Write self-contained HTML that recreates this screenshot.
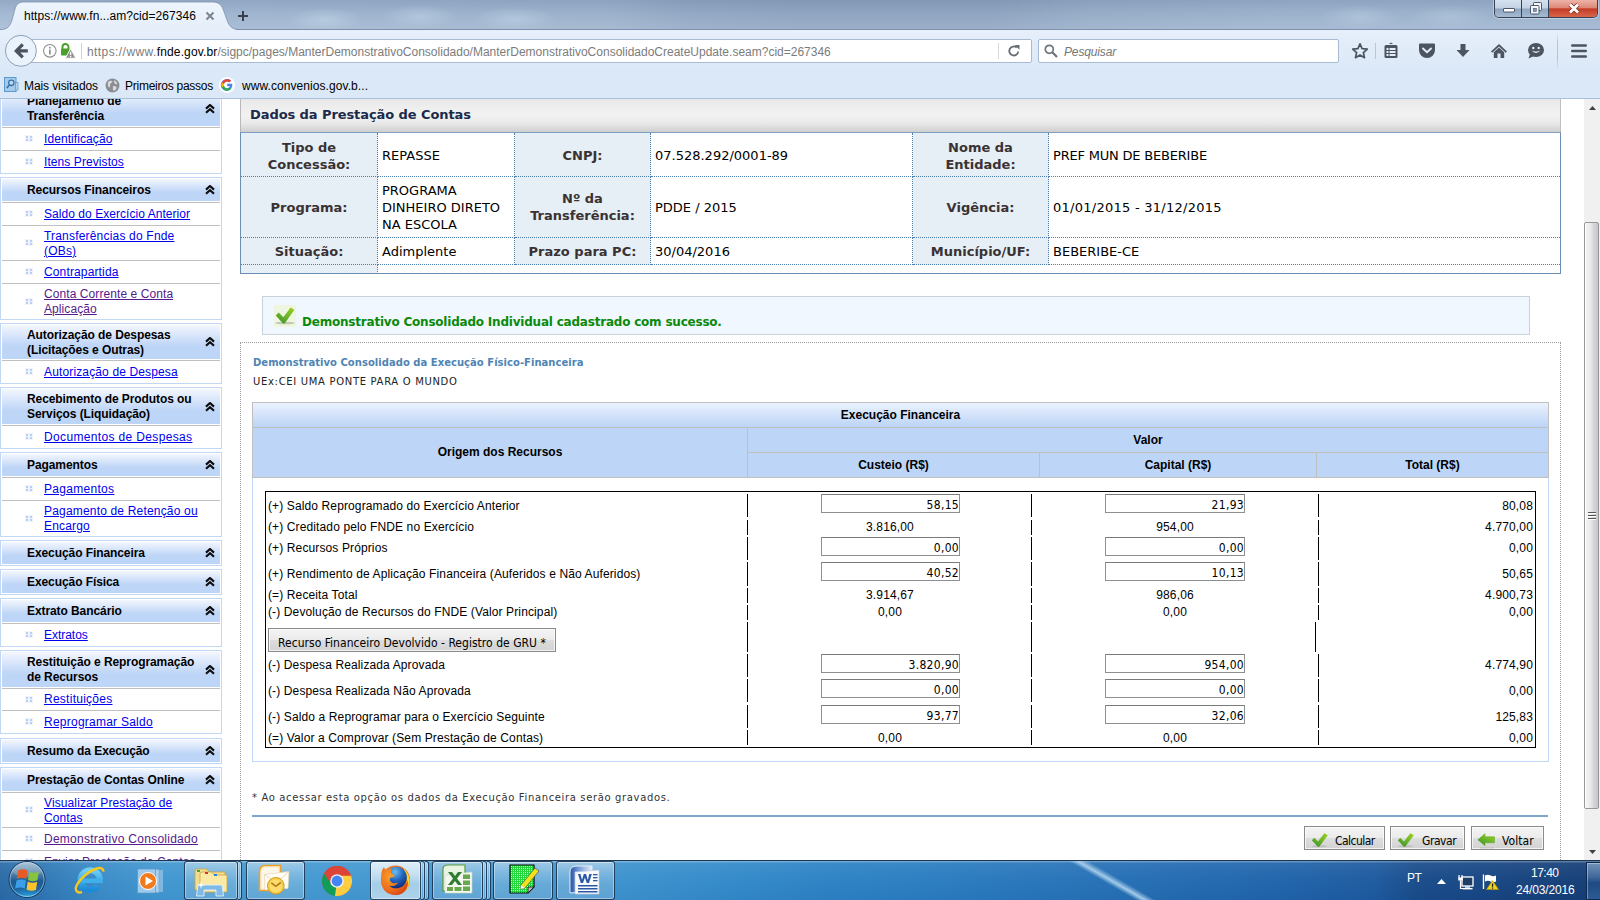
<!DOCTYPE html>
<html lang="pt-BR">
<head>
<meta charset="utf-8">
<title>SiGPC - Demonstrativo Consolidado</title>
<style>
*{box-sizing:border-box;margin:0;padding:0}
html,body{width:1600px;height:900px;overflow:hidden;background:#fff}
body{position:relative;font-family:"Liberation Sans",sans-serif;font-size:12px;color:#000}
.abs{position:absolute}
/* ===== browser chrome ===== */
#titlebar{position:absolute;left:0;top:0;width:1600px;height:32px;background:
 radial-gradient(ellipse 38px 12px at 325px 20px,rgba(196,216,234,.55),rgba(196,216,234,0)),
 radial-gradient(ellipse 38px 12px at 420px 17px,rgba(196,216,234,.5),rgba(196,216,234,0)),
 radial-gradient(ellipse 42px 12px at 515px 19px,rgba(196,216,234,.5),rgba(196,216,234,0)),
 radial-gradient(ellipse 40px 12px at 1360px 17px,rgba(196,216,234,.4),rgba(196,216,234,0)),
 radial-gradient(ellipse 40px 12px at 1450px 17px,rgba(196,216,234,.35),rgba(196,216,234,0)),
 linear-gradient(180deg,rgba(40,65,105,.16) 0,rgba(40,65,105,.04) 40%,rgba(255,255,255,.10) 100%),
 linear-gradient(90deg,#a9bdd6 0,#a4b9d3 15%,#a0b5cf 38%,#97acc7 43%,#93a8c3 50%,#93a8c3 62%,#9bb1cb 68%,#a0b6d0 80%,#a1b7d1 100%)}
#titlebar .shade{display:none}
#navbar{position:absolute;left:0;top:30px;width:1600px;height:42px;background:#dbe8f7}
#bmbar{position:absolute;left:0;top:72px;width:1600px;height:26px;background:#dbe8f7}
#chromeline{position:absolute;left:0;top:98px;width:1600px;height:1px;background:#a9c0dc}
.seg{font-family:"Liberation Sans",sans-serif}

#navbar{background:linear-gradient(180deg,#e6effa 0,#dbe8f7 100%)}
#tab{position:absolute;left:0;top:0}
.ct{position:absolute;white-space:nowrap;font-family:"Liberation Sans",sans-serif;color:#000}
#urlbar{position:absolute;left:28px;top:39px;width:1004px;height:24px;background:#fff;border:1px solid #a9bbd2;border-radius:2px}
#sbar{position:absolute;left:1038px;top:39px;width:301px;height:24px;background:#fff;border:1px solid #a9bbd2;border-radius:2px}
#wc{position:absolute;left:1494px;top:0;width:104px;height:18px;border:1px solid #364357;border-top:0;border-radius:0 0 5px 5px;overflow:hidden;box-shadow:0 0 0 1px rgba(255,255,255,.35)}
#wc div{position:absolute;top:0;height:17px}
.ico{position:absolute}
/* ===== sidebar ===== */
#side{position:absolute;left:0;top:99px;width:222px;height:761px;overflow:hidden}
#sidein{position:absolute;left:0;top:-9px;width:222px}
.pn{border:1px solid #c1d7f3;padding:1px;margin-bottom:3px;background:#fff;width:222px}
.ph{position:relative;min-height:22px;padding:2px 22px 2px 25px;letter-spacing:-.08px;font-weight:bold;font-size:12px;line-height:15px;color:#000;background:linear-gradient(180deg,#f3f7fe 0,#dbe7fb 28%,#c6daf8 52%,#bdd5f7 64%,#bdd5f7 100%);display:flex;align-items:center}
.ph svg{position:absolute;right:5.500px;top:50%;margin-top:-5px}
.pi{position:relative;border-top:1px solid #c0c0c0;min-height:23px;padding:2px 19px 2px 42px;font-size:12px;line-height:15px;display:flex;align-items:center}
.ph + .pi{margin-top:1px}
.pn.it{padding-bottom:0}
#p2 .pi:last-child,#p5 .pi:last-child{min-height:36px}
#p4 .ph,#p9 .ph{min-height:35px}
#p3 .ph{padding-top:3px;padding-bottom:1px}
#p2 .pi:nth-child(3),#p11 .pi:nth-child(2){padding-top:3px;padding-bottom:1px}
#p9{margin-bottom:4px}#p9 .ph + .pi{min-height:22px}
.pi a{color:#0000ee;text-decoration:underline;letter-spacing:.08px}
.pi a.v{color:#551a8b}
.pi i{position:absolute;left:23px;top:50%;margin-top:-4px;width:8px;height:7px;background:
 linear-gradient(#b9d0f4,#b9d0f4) 1px 1px/2px 2px no-repeat,linear-gradient(#b9d0f4,#b9d0f4) 5px 1px/2px 2px no-repeat,
 linear-gradient(#b9d0f4,#b9d0f4) 1px 4px/2px 2px no-repeat,linear-gradient(#b9d0f4,#b9d0f4) 5px 4px/2px 2px no-repeat,
 linear-gradient(#eef3fc,#eef3fc) 0 0/8px 7px no-repeat}
/* ===== main ===== */
#main{position:absolute;left:222px;top:99px;width:1361px;height:761px;overflow:hidden;background:#fff}
.vd{font-family:"DejaVu Sans","Liberation Sans",sans-serif}

#mainin{position:absolute;left:-222px;top:-99px;width:1600px;height:900px}
#dph{position:absolute;left:240px;top:99px;width:1321px;height:33px;background:linear-gradient(180deg,#e8e8e8 0,#eeeeee 25%,#f2f2f2 50%,#e8e8e8 75%,#cfcfcf 100%);border-left:1px solid #b9b9b9;border-right:1px solid #c0c0c0}
#dph span{letter-spacing:-.08px;position:absolute;left:9px;top:7px;font:bold 13px/17px "DejaVu Sans","Liberation Sans",sans-serif;color:#1b2a4a;white-space:nowrap}
#dt{position:absolute;left:240px;top:132px;width:1321px;height:142px;border:1px solid #6d8fb3;border-top:1px solid #7f9fc0;background:#fff;overflow:hidden}
#dt .c{position:absolute;display:flex;align-items:center;font:13px/17px "DejaVu Sans","Liberation Sans",sans-serif;border-right:1px dotted #4c7fae;border-bottom:1px dotted #4c7fae}
#dt .l{background:#e6eef6;justify-content:center;text-align:center;font-weight:bold;color:#3a3232}
#dt .v{padding-left:4px;color:#000}
#msg{position:absolute;left:262px;top:296px;width:1268px;height:39px;border:1px solid #c9d1d9;background:#f0f7fe}
#msg span{letter-spacing:-.21px;position:absolute;left:39px;top:17px;font:bold 12px/17px "DejaVu Sans","Liberation Sans",sans-serif;color:#0a8a0a;white-space:nowrap}
#msg svg{position:absolute;left:11px;top:8px}
#fs{position:absolute;left:240px;top:342px;width:1321px;height:560px;border:1px dotted #9a9a9a;border-bottom:0}
.t11{position:absolute;font:10px/14px "DejaVu Sans","Liberation Sans",sans-serif;white-space:nowrap}
#h2{left:253px;letter-spacing:.035px;top:356px;font-weight:bold;color:#4f84b4}
#uex{left:253px;letter-spacing:.68px;top:375px;color:#222}
#note{left:252px;letter-spacing:.64px;top:791px;color:#333}
#hr{position:absolute;left:252px;top:815px;width:1296px;height:2px;background:#7fa6ca}

#tp{position:absolute;left:252px;top:402px;width:1297px;height:360px;border:1px solid #c1d7f3;background:#fff}
.th{position:absolute;padding-top:0;font:bold 12px/15px "Liberation Sans",sans-serif;color:#000;display:flex;align-items:center;justify-content:center;background:#bdd5f7;border-right:1px solid #c0c0c0;border-bottom:1px solid #c0c0c0}
#bx{position:absolute;left:265px;top:491px;width:1271px;height:257px;border:1px solid #000}
.r{position:absolute;left:268px;letter-spacing:.12px;font:12px/15px "Liberation Sans",sans-serif;color:#000;white-space:nowrap}
.n{position:absolute;letter-spacing:.15px;font:12px/15px "Liberation Sans",sans-serif;color:#000;white-space:nowrap;text-align:center;width:120px}
.n.c1{left:830px}.n.c2{left:1115px}
.n.c3{left:1413px;text-align:right}
.in{position:absolute;width:139px;height:19px;border:1px solid #8e8f8f;border-top-color:#7a7a7a;background:#fff;font:12px/17px "DejaVu Sans Condensed","Liberation Sans",sans-serif;letter-spacing:.3px;text-align:right;padding:2px 0 0 0;color:#000}
.in.c1{left:821px}.in.c2{left:1105px;width:140px}
.vs{position:absolute;width:1px;background:#000}
.btn{position:absolute;height:24px;border:1px solid #8a8a8a;border-radius:0;box-shadow:inset 0 0 0 1px rgba(255,255,255,.7);background:linear-gradient(180deg,#f4f4f4 0,#ebebeb 48%,#dddddd 52%,#d2d2d2 100%);font:12px/29px "DejaVu Sans Condensed","Liberation Sans",sans-serif;color:#000;white-space:nowrap}
/* ===== taskbar ===== */
#taskbar{position:absolute;left:0;top:860px;width:1600px;height:40px;background:linear-gradient(90deg,#2b73b7 0,#3280c4 20%,#2f7cc0 45%,#2468ad 70%,#1c4f8c 100%)}

#taskbar{background:linear-gradient(90deg,#2a6aa6 0,#2f76b3 2.5%,#3a8bc7 6%,#4197d0 10%,#4399d1 20%,#4197d0 30%,#3d93ce 38%,#3289c9 46%,#2c82c4 52%,#2a7dc1 58%,#2876bb 64%,#246db3 72%,#2064ab 80%,#1d5a9f 86%,#194c8b 88.5%,#174683 93%,#143d75 100%);border-top:1px solid #1c3550;overflow:hidden}
#taskbar .gl{position:absolute;left:0;top:0;width:1600px;height:39px;background:linear-gradient(180deg,rgba(255,255,255,.32) 0,rgba(255,255,255,.30) 1px,rgba(255,255,255,.07) 2px,rgba(255,255,255,.02) 45%,rgba(0,0,40,.03) 100%)}
#taskbar .streak{position:absolute;left:1103px;top:0;width:20px;height:40px;background:linear-gradient(90deg,rgba(170,208,236,0),rgba(185,218,242,.85) 45%,rgba(170,208,236,.5) 70%,rgba(170,208,236,0));transform:skewX(60deg)}
.tb{position:absolute;top:0;height:39px;border:1px solid rgba(18,42,72,.85);border-radius:3px;background:linear-gradient(180deg,rgba(255,255,255,.46) 0,rgba(255,255,255,.30) 30%,rgba(255,255,255,.20) 60%,rgba(255,255,255,.17) 100%);box-shadow:inset 0 0 0 1px rgba(255,255,255,.38)}
.tb.act{background:linear-gradient(180deg,rgba(255,255,255,.82) 0,rgba(255,255,255,.66) 40%,rgba(255,255,255,.52) 60%,rgba(255,255,255,.58) 100%)}
.tb.stk{border-left:0;border-radius:0 3px 3px 0}
.tray{position:absolute;color:#fff;font-family:"Liberation Sans",sans-serif;white-space:nowrap}

#vsb{position:absolute;left:1584px;top:99px;width:16px;height:761px;background:#f0f0f0}
#vsb .thumb{position:absolute;left:0;top:123px;width:15px;height:587px;border:1px solid #979797;border-radius:2px;background:linear-gradient(90deg,#f6f6f6 0,#ebebeb 40%,#d4d4d8 70%,#c6c6cb 100%);box-shadow:inset 1px 0 0 #fff;display:block}
</style>
</head>
<body>
<div id="titlebar"><div class="shade"></div></div>
<div id="navbar"></div>
<div id="bmbar"></div>
<div id="chromeline"></div>
<div id="side"><div id="sidein">
<div class="pn it" id="p1"><div class="ph"><span>Planejamento de Transferência</span><svg width="10" height="10" viewBox="0 0 10 10"><path d="M1 4.6 L5 1 L9 4.6 M1 8.8 L5 5.2 L9 8.8" fill="none" stroke="#0c0c0c" stroke-width="2.100"/></svg></div>
<div class="pi"><i></i><a>Identificação</a></div>
<div class="pi"><i></i><a>Itens Previstos</a></div>
</div>
<div class="pn it" id="p2"><div class="ph"><span>Recursos Financeiros</span><svg width="10" height="10" viewBox="0 0 10 10"><path d="M1 4.6 L5 1 L9 4.6 M1 8.8 L5 5.2 L9 8.8" fill="none" stroke="#0c0c0c" stroke-width="2.100"/></svg></div>
<div class="pi"><i></i><a style="letter-spacing:0.05px">Saldo do Exercício Anterior</a></div>
<div class="pi"><i></i><a style="letter-spacing:0.19px">Transferências do Fnde (OBs)</a></div>
<div class="pi"><i></i><a style="letter-spacing:0.14px">Contrapartida</a></div>
<div class="pi"><i></i><a class="v">Conta Corrente e Conta Aplicação</a></div>
</div>
<div class="pn it" id="p3"><div class="ph"><span>Autorização de Despesas (Licitações e Outras)</span><svg width="10" height="10" viewBox="0 0 10 10"><path d="M1 4.6 L5 1 L9 4.6 M1 8.8 L5 5.2 L9 8.8" fill="none" stroke="#0c0c0c" stroke-width="2.100"/></svg></div>
<div class="pi"><i></i><a style="letter-spacing:0.14px">Autorização de Despesa</a></div>
</div>
<div class="pn it" id="p4"><div class="ph"><span>Recebimento de Produtos ou Serviços (Liquidação)</span><svg width="10" height="10" viewBox="0 0 10 10"><path d="M1 4.6 L5 1 L9 4.6 M1 8.8 L5 5.2 L9 8.8" fill="none" stroke="#0c0c0c" stroke-width="2.100"/></svg></div>
<div class="pi"><i></i><a style="letter-spacing:0.35px">Documentos de Despesas</a></div>
</div>
<div class="pn it" id="p5"><div class="ph"><span>Pagamentos</span><svg width="10" height="10" viewBox="0 0 10 10"><path d="M1 4.6 L5 1 L9 4.6 M1 8.8 L5 5.2 L9 8.8" fill="none" stroke="#0c0c0c" stroke-width="2.100"/></svg></div>
<div class="pi"><i></i><a style="letter-spacing:0.30px">Pagamentos</a></div>
<div class="pi"><i></i><a style="letter-spacing:0.18px">Pagamento de Retenção ou Encargo</a></div>
</div>
<div class="pn" id="p6"><div class="ph"><span>Execução Financeira</span><svg width="10" height="10" viewBox="0 0 10 10"><path d="M1 4.6 L5 1 L9 4.6 M1 8.8 L5 5.2 L9 8.8" fill="none" stroke="#0c0c0c" stroke-width="2.100"/></svg></div>
</div>
<div class="pn" id="p7"><div class="ph"><span>Execução Física</span><svg width="10" height="10" viewBox="0 0 10 10"><path d="M1 4.6 L5 1 L9 4.6 M1 8.8 L5 5.2 L9 8.8" fill="none" stroke="#0c0c0c" stroke-width="2.100"/></svg></div>
</div>
<div class="pn it" id="p8"><div class="ph"><span>Extrato Bancário</span><svg width="10" height="10" viewBox="0 0 10 10"><path d="M1 4.6 L5 1 L9 4.6 M1 8.8 L5 5.2 L9 8.8" fill="none" stroke="#0c0c0c" stroke-width="2.100"/></svg></div>
<div class="pi"><i></i><a style="letter-spacing:-0.03px">Extratos</a></div>
</div>
<div class="pn it" id="p9"><div class="ph"><span>Restituição e Reprogramação de Recursos</span><svg width="10" height="10" viewBox="0 0 10 10"><path d="M1 4.6 L5 1 L9 4.6 M1 8.8 L5 5.2 L9 8.8" fill="none" stroke="#0c0c0c" stroke-width="2.100"/></svg></div>
<div class="pi"><i></i><a style="letter-spacing:0.26px">Restituições</a></div>
<div class="pi"><i></i><a style="letter-spacing:0.24px">Reprogramar Saldo</a></div>
</div>
<div class="pn" id="p10"><div class="ph"><span>Resumo da Execução</span><svg width="10" height="10" viewBox="0 0 10 10"><path d="M1 4.6 L5 1 L9 4.6 M1 8.8 L5 5.2 L9 8.8" fill="none" stroke="#0c0c0c" stroke-width="2.100"/></svg></div>
</div>
<div class="pn it" id="p11"><div class="ph"><span>Prestação de Contas Online</span><svg width="10" height="10" viewBox="0 0 10 10"><path d="M1 4.6 L5 1 L9 4.6 M1 8.8 L5 5.2 L9 8.8" fill="none" stroke="#0c0c0c" stroke-width="2.100"/></svg></div>
<div class="pi"><i></i><a style="letter-spacing:0.11px">Visualizar Prestação de Contas</a></div>
<div class="pi"><i></i><a class="v" style="letter-spacing:0.26px">Demonstrativo Consolidado</a></div>
<div class="pi"><i></i><a class="v">Enviar Prestação de Contas</a></div>
</div>
</div></div>
<div id="main">
<div id="mainin">
<div id="dph"><span id="dpht">Dados da Prestação de Contas</span></div>
<div id="dt">
<div class="c l" style="left:0px;top:0px;width:137px;height:44px;padding-top:2px">Tipo de<br>Concessão:</div>
<div class="c v" style="left:137px;top:0px;width:137px;height:44px;padding-top:2px">REPASSE</div>
<div class="c l" style="left:274px;top:0px;width:136px;height:44px;padding-top:2px">CNPJ:</div>
<div class="c v" style="left:410px;top:0px;width:262px;height:44px;padding-top:2px">07.528.292/0001-89</div>
<div class="c l" style="left:672px;top:0px;width:136px;height:44px;padding-top:2px">Nome da<br>Entidade:</div>
<div class="c v" style="left:808px;top:0px;width:511px;height:44px;border-right:0;padding-top:2px;letter-spacing:-.2px">PREF MUN DE BEBERIBE</div>
<div class="c l" style="left:0px;top:44px;width:137px;height:61px">Programa:</div>
<div class="c v" style="left:137px;top:44px;width:137px;height:61px">PROGRAMA<br>DINHEIRO DIRETO<br>NA ESCOLA</div>
<div class="c l" style="left:274px;top:44px;width:136px;height:61px">Nº da<br>Transferência:</div>
<div class="c v" style="left:410px;top:44px;width:262px;height:61px">PDDE / 2015</div>
<div class="c l" style="left:672px;top:44px;width:136px;height:61px">Vigência:</div>
<div class="c v" style="left:808px;top:44px;width:511px;height:61px;border-right:0;letter-spacing:.26px">01/01/2015 - 31/12/2015</div>
<div class="c l" style="left:0px;top:105px;width:137px;height:27px">Situação:</div>
<div class="c v" style="left:137px;top:105px;width:137px;height:27px">Adimplente</div>
<div class="c l" style="left:274px;top:105px;width:136px;height:27px">Prazo para PC:</div>
<div class="c v" style="left:410px;top:105px;width:262px;height:27px">30/04/2016</div>
<div class="c l" style="left:672px;top:105px;width:136px;height:27px">Município/UF:</div>
<div class="c v" style="left:808px;top:105px;width:511px;height:27px;border-right:0">BEBERIBE-CE</div>
<div class="c l" style="left:0;top:132px;width:137px;height:9px;border-bottom:0"></div>
</div>
<div id="msg"><svg width="22" height="22" viewBox="0 0 22 22"><defs><linearGradient id="ckg" x1="1" y1="0" x2="0.300" y2="1"><stop offset="0" stop-color="#9fd01a"/><stop offset=".5" stop-color="#72b82c"/><stop offset="1" stop-color="#44982c"/></linearGradient></defs><rect width="22" height="22" fill="#eef6e0"/><ellipse cx="11" cy="18" rx="10" ry="1.300" fill="#c3cab2"/><path d="M1.800 10.500 L4.700 7.600 L9.300 12.200 L16.600 2.400 L20.400 4.800 L10.700 18.500 L9 18.500 Z" fill="url(#ckg)"/></svg><span id="msgt">Demonstrativo Consolidado Individual cadastrado com sucesso.</span></div>
<div id="fs"></div>
<div class="t11" id="h2">Demonstrativo Consolidado da Execução Físico-Financeira</div>
<div class="t11" id="uex">UEx:CEI UMA PONTE PARA O MUNDO</div>
<!--T0-->
<div id="tp"></div>
<div class="th" style="left:253px;top:403px;width:1295px;height:25px;border-right:0;background:linear-gradient(180deg,#eaf2fd 0,#d3e3fa 50%,#bbd4f7 100%)">Execução Financeira</div>
<div class="th" style="left:253px;top:428px;width:495px;height:50px;padding-bottom:1px">Origem dos Recursos</div>
<div class="th" style="left:748px;top:428px;width:800px;height:25px;border-right:0">Valor</div>
<div class="th" style="left:748px;top:453px;width:292px;height:25px">Custeio (R$)</div>
<div class="th" style="left:1040px;top:453px;width:277px;height:25px">Capital (R$)</div>
<div class="th" style="left:1317px;top:453px;width:231px;height:25px;border-right:0">Total (R$)</div>
<div style="position:absolute;left:252px;top:402px;width:1297px;height:76px;border-left:1px solid #c0c0c0;border-top:1px solid #c0c0c0;border-right:1px solid #c0c0c0"></div>
<div id="bx"></div>
<div class="r" style="top:499px">(+) Saldo Reprogramado do Exercício Anterior</div>
<div class="vs" style="left:747px;top:494px;height:23px"></div>
<div class="vs" style="left:1031px;top:494px;height:23px"></div>
<div class="vs" style="left:1318px;top:494px;height:23px"></div>
<div class="in c1" style="top:494px">58,15</div>
<div class="in c2" style="top:494px">21,93</div>
<div class="n c3" style="top:499px">80,08</div>
<div class="r" style="top:520px">(+) Creditado pelo FNDE no Exercício</div>
<div class="vs" style="left:747px;top:520px;height:15px"></div>
<div class="vs" style="left:1031px;top:520px;height:15px"></div>
<div class="vs" style="left:1318px;top:520px;height:15px"></div>
<div class="n c1" style="top:520px">3.816,00</div>
<div class="n c2" style="top:520px">954,00</div>
<div class="n c3" style="top:520px">4.770,00</div>
<div class="r" style="top:541px">(+) Recursos Próprios</div>
<div class="vs" style="left:747px;top:537px;height:23px"></div>
<div class="vs" style="left:1031px;top:537px;height:23px"></div>
<div class="vs" style="left:1318px;top:537px;height:23px"></div>
<div class="in c1" style="top:537px">0,00</div>
<div class="in c2" style="top:537px">0,00</div>
<div class="n c3" style="top:541px">0,00</div>
<div class="r" style="top:567px">(+) Rendimento de Aplicação Financeira (Auferidos e Não Auferidos)</div>
<div class="vs" style="left:747px;top:562px;height:24px"></div>
<div class="vs" style="left:1031px;top:562px;height:24px"></div>
<div class="vs" style="left:1318px;top:562px;height:24px"></div>
<div class="in c1" style="top:562px">40,52</div>
<div class="in c2" style="top:562px">10,13</div>
<div class="n c3" style="top:567px">50,65</div>
<div class="r" style="top:588px">(=) Receita Total</div>
<div class="vs" style="left:747px;top:588px;height:15px"></div>
<div class="vs" style="left:1031px;top:588px;height:15px"></div>
<div class="vs" style="left:1318px;top:588px;height:15px"></div>
<div class="n c1" style="top:588px">3.914,67</div>
<div class="n c2" style="top:588px">986,06</div>
<div class="n c3" style="top:588px">4.900,73</div>
<div class="r" style="top:605px">(-) Devolução de Recursos do FNDE (Valor Principal)</div>
<div class="vs" style="left:747px;top:605px;height:15px"></div>
<div class="vs" style="left:1031px;top:605px;height:15px"></div>
<div class="vs" style="left:1318px;top:605px;height:15px"></div>
<div class="n c1" style="top:605px">0,00</div>
<div class="n c2" style="top:605px">0,00</div>
<div class="n c3" style="top:605px">0,00</div>
<div class="vs" style="left:747px;top:622px;height:30px"></div>
<div class="vs" style="left:1031px;top:622px;height:30px"></div>
<div class="vs" style="left:1315px;top:622px;height:30px"></div>
<div class="btn" style="left:268px;top:628px;width:288px;height:24px;padding-left:9px;font-size:12px;line-height:28px;letter-spacing:.03px" id="grub">Recurso Financeiro Devolvido - Registro de GRU *</div>
<div class="r" style="top:658px">(-) Despesa Realizada Aprovada</div>
<div class="vs" style="left:747px;top:654px;height:23px"></div>
<div class="vs" style="left:1031px;top:654px;height:23px"></div>
<div class="vs" style="left:1318px;top:654px;height:23px"></div>
<div class="in c1" style="top:654px">3.820,90</div>
<div class="in c2" style="top:654px">954,00</div>
<div class="n c3" style="top:658px">4.774,90</div>
<div class="r" style="top:684px">(-) Despesa Realizada Não Aprovada</div>
<div class="vs" style="left:747px;top:679px;height:23px"></div>
<div class="vs" style="left:1031px;top:679px;height:23px"></div>
<div class="vs" style="left:1318px;top:679px;height:23px"></div>
<div class="in c1" style="top:679px">0,00</div>
<div class="in c2" style="top:679px">0,00</div>
<div class="n c3" style="top:684px">0,00</div>
<div class="r" style="top:710px">(-) Saldo a Reprogramar para o Exercício Seguinte</div>
<div class="vs" style="left:747px;top:705px;height:23px"></div>
<div class="vs" style="left:1031px;top:705px;height:23px"></div>
<div class="vs" style="left:1318px;top:705px;height:23px"></div>
<div class="in c1" style="top:705px">93,77</div>
<div class="in c2" style="top:705px">32,06</div>
<div class="n c3" style="top:710px">125,83</div>
<div class="r" style="top:731px">(=) Valor a Comprovar (Sem Prestação de Contas)</div>
<div class="vs" style="left:747px;top:730px;height:15px"></div>
<div class="vs" style="left:1031px;top:730px;height:15px"></div>
<div class="vs" style="left:1318px;top:730px;height:15px"></div>
<div class="n c1" style="top:731px">0,00</div>
<div class="n c2" style="top:731px">0,00</div>
<div class="n c3" style="top:731px">0,00</div>
<!--T1-->
<div class="t11" id="note">* Ao acessar esta opção os dados da Execução Financeira serão gravados.</div>
<div id="hr"></div>
<div class="btn" style="left:1304px;top:826px;width:81px;padding-left:30px;letter-spacing:-.55px"><svg width="18" height="16" viewBox="0 0 18 16" style="position:absolute;left:6px;top:5px"><ellipse cx="8.500" cy="14.300" rx="7.500" ry="1" fill="#bdbdbd"/><path d="M.8 8.300 L3.300 5.800 L7 9.500 L13.300 1.200 L16.800 3.300 L8.300 14.800 L6.800 14.800 Z" fill="url(#ckg)"/></svg>Calcular</div>
<div class="btn" style="left:1390px;top:826px;width:75px;padding-left:31px;letter-spacing:-.45px"><svg width="18" height="16" viewBox="0 0 18 16" style="position:absolute;left:6px;top:5px"><ellipse cx="8.500" cy="14.300" rx="7.500" ry="1" fill="#bdbdbd"/><path d="M.8 8.300 L3.300 5.800 L7 9.500 L13.300 1.200 L16.800 3.300 L8.300 14.800 L6.800 14.800 Z" fill="url(#ckg)"/></svg>Gravar</div>
<div class="btn" style="left:1471px;top:826px;width:73px;padding-left:30px;letter-spacing:.05px"><svg width="20" height="16" viewBox="0 0 20 16" style="position:absolute;left:5px;top:5.500px"><path d="M.8 6.800 L8 .8 V3.800 H17.500 V9.800 H8 V12.800 Z" fill="url(#ckg)" stroke="#58a81e" stroke-width=".5"/><path d="M3 14.8 H17" stroke="#c2c2c2" stroke-width="1.2"/></svg>Voltar</div>
</div>
</div>
<div id="vsb"><svg style="position:absolute;left:5px;top:7px" width="7" height="4" viewBox="0 0 7 4"><path d="M0 4 L3.500 0 L7 4 Z" fill="#404040"/></svg><div class="thumb"><svg style="position:absolute;left:3px;top:289px" width="8" height="9" viewBox="0 0 8 9"><path d="M0 .5 H8 M0 3.500 H8 M0 6.500 H8" stroke="#555" stroke-width="1"/><path d="M0 1.500 H8 M0 4.500 H8 M0 7.500 H8" stroke="#fff" stroke-width="1"/></svg></div><svg style="position:absolute;left:5px;top:751px" width="7" height="4" viewBox="0 0 7 4"><path d="M0 0 L3.500 4 L7 0 Z" fill="#404040"/></svg></div>
<div id="taskbar">
<div class="gl"></div><div class="streak"></div>
<div class="tb" style="left:184px;width:54px"></div><div class="tb stk" style="left:238px;width:4px"></div>
<div class="tb" style="left:246px;width:59px"></div>
<div class="tb act" style="left:370px;width:51px"></div><div class="tb stk" style="left:421px;width:4px"></div><div class="tb stk" style="left:425px;width:4px"></div>
<div class="tb" style="left:432px;width:51px"></div><div class="tb stk" style="left:483px;width:4px"></div><div class="tb stk" style="left:487px;width:4px"></div>
<div class="tb" style="left:493px;width:60px"></div>
<div class="tb" style="left:556px;width:59px"></div>
<svg style="position:absolute;left:6px;top:0" width="44" height="40" viewBox="0 0 44 40"><defs><linearGradient id="og" x1="0" y1="0" x2="0" y2="1"><stop offset="0" stop-color="#9db9d1"/><stop offset=".35" stop-color="#4f7fa8"/><stop offset=".55" stop-color="#1d5a92"/><stop offset="1" stop-color="#1b6fae"/></linearGradient><radialGradient id="og2" cx="50%" cy="100%" r="60%"><stop offset="0" stop-color="#5fe0ff" stop-opacity=".95"/><stop offset=".6" stop-color="#2aa5e0" stop-opacity=".5"/><stop offset="1" stop-color="#2aa5e0" stop-opacity="0"/></radialGradient><clipPath id="oc"><circle cx="21" cy="18.500" r="17.500"/></clipPath></defs><circle cx="21" cy="18.500" r="18" fill="url(#og)" stroke="#173a60" stroke-width="1"/><g clip-path="url(#oc)"><rect x="0" y="18" width="44" height="22" fill="url(#og2)"/><ellipse cx="21" cy="6" rx="17" ry="10" fill="#fff" opacity=".18"/></g><circle cx="21" cy="18.500" r="17" fill="none" stroke="rgba(200,228,248,.55)" stroke-width="1"/><path d="M12 9.500 Q16.500 7 21.500 9.500 L20.300 17.800 Q15.500 15.500 10.800 17.800 Z" fill="#ea5a24"/><path d="M23.300 10.500 Q28 13 32.800 10.800 L31.500 19 Q27 21.500 22 19 Z" fill="#86c440"/><path d="M10.500 19.500 Q15 17.300 20 19.500 L18.800 27.500 Q14 25.300 9.200 27.500 Z" fill="#3b9ee8"/><path d="M21.700 20.500 Q26.500 23 31.200 20.800 L30 28.800 Q25.500 31 20.500 28.500 Z" fill="#fbc22c"/></svg>
<svg style="position:absolute;left:72px;top:2px" width="36" height="36" viewBox="0 0 36 36"><defs><linearGradient id="ieg" x1="0" y1="0" x2="0" y2="1"><stop offset="0" stop-color="#6fd0f7"/><stop offset="1" stop-color="#1b8bd8"/></linearGradient></defs><path d="M28 17 A9.700 9.700 0 1 0 25.900 23" fill="none" stroke="url(#ieg)" stroke-width="6"/><path d="M9.500 17.800 H30.800" stroke="#3fb0ec" stroke-width="4.600"/><g transform="rotate(-40 17.500 17)"><path d="M4 21.500 A17 6.500 0 0 1 .5 17 A17 6.500 0 0 1 34.500 17 A17 6.500 0 0 1 33.500 19.500" fill="none" stroke="#f7c81e" stroke-width="2.400"/></g></svg>
<svg style="position:absolute;left:136px;top:7px" width="30" height="28" viewBox="0 0 30 28"><rect x="9" y="2" width="18" height="22" fill="#8fbfe3" opacity=".8"/><rect x="5" y="1.500" width="18" height="23" fill="#a9d0ee" stroke="#6fa6d2" stroke-width=".6"/><rect x="1.500" y="1" width="18" height="24" fill="#9ecbed" stroke="#5d97c8" stroke-width=".7"/><circle cx="12" cy="13" r="8.500" fill="#f07a1c" stroke="#fff" stroke-width="1"/><path d="M9.500 8.500 L17 13 L9.500 17.500 Z" fill="#fff"/></svg>
<svg style="position:absolute;left:192px;top:2px" width="38" height="34" viewBox="0 0 38 34"><path d="M3 7 L3 27 L33 27 L33 9 L17 9 L15 6 L5 6 Z" fill="#f3dc8b" stroke="#c9a545" stroke-width=".8"/><path d="M8 10 L8 29 L35 29 L35 12 L22 12 L20 9 L10 9 Z" fill="#fbeaa6" stroke="#c9a545" stroke-width=".8"/><rect x="5" y="7" width="3" height="2" fill="#3aa83a"/><rect x="13" y="9" width="3" height="2" fill="#d33"/><rect x="22" y="11" width="3" height="2" fill="#2f7fd6"/><path d="M6 22 L30 22 L31.500 33 L24 33 L24 27 L12 27 L12 33 L4.500 33 Z" fill="#7fb9e6" stroke="#dff0fc" stroke-width=".9"/><path d="M9 18 L9.800 21.200 L13 22 L9.800 22.800 L9 26 L8.200 22.800 L5 22 L8.200 21.200 Z" fill="#fff"/></svg>
<svg style="position:absolute;left:256px;top:2px" width="38" height="34" viewBox="0 0 38 34"><path d="M3.500 9 Q3.500 2.500 10 2.500 L24.500 2.500 L24.500 27.500 L3.500 27.500 Z" fill="#fdf0d8" stroke="#eea02a" stroke-width="1.600"/><path d="M6 10 Q6 5 11 5 L22 5 L22 25 L6 25 Z" fill="#fff8ea"/><path d="M8.500 11.500 L33 8.500 L32 25.500 L9 27 Z" fill="#fffdf6" stroke="#e2d5b4" stroke-width=".7"/><path d="M8.500 11.500 L20 20 L33 8.500" fill="none" stroke="#e0cfa6" stroke-width=".8"/><circle cx="19.800" cy="22.800" r="8.300" fill="#f8cf4a" stroke="#d49a1c" stroke-width="1"/><circle cx="19.800" cy="22.800" r="6.300" fill="#fbdc6c"/><path d="M15.300 19.800 L19.800 23.300 L24.800 19.500" fill="none" stroke="#b07a14" stroke-width="1.600"/></svg>
<svg style="position:absolute;left:321px;top:4px" width="32" height="32" viewBox="0 0 32 32"><circle cx="16" cy="16" r="15" fill="#db4437"/><path d="M16 16 L3 8.500 A15 15 0 0 0 14 30.900 L22.500 19.800 Z" fill="#0f9d58"/><path d="M16 16 L14 30.900 A15 15 0 0 0 30 10.500 L16 10.500 Z" fill="#ffcd40"/><path d="M3 8.500 A15 15 0 0 1 30 10.500 L16 10.500 L10.300 19.300 Z" fill="#db4437"/><circle cx="16" cy="16" r="6.800" fill="#f1f1f1"/><circle cx="16" cy="16" r="5.400" fill="#4285f4"/></svg>
<svg style="position:absolute;left:379px;top:2px" width="32" height="33" viewBox="0 0 32 33"><defs><radialGradient id="ffg" cx="35%" cy="35%" r="80%"><stop offset="0" stop-color="#f9a128"/><stop offset=".6" stop-color="#ee6a1c"/><stop offset="1" stop-color="#c93a14"/></radialGradient><radialGradient id="ffb" cx="45%" cy="25%" r="75%"><stop offset="0" stop-color="#6cc0ee"/><stop offset=".5" stop-color="#2468c0"/><stop offset="1" stop-color="#0f2b78"/></radialGradient></defs><circle cx="16.500" cy="17" r="14.500" fill="url(#ffg)"/><path d="M24 5.500 C30 9 32.500 17 29.500 23.500 C28 27 25 29.500 22 30.500 C27 26 28.500 19 27 14 C26.300 10.500 25.500 8 24 5.500 Z" fill="#fbd02a"/><circle cx="17" cy="14.500" r="10.800" fill="url(#ffb)"/><path d="M2.300 13 C2 9 3.500 6 5 4 C5.500 6 6.500 7 8 7.500 C9.500 6 11.500 5.500 13 6 C11.500 7.500 11.500 9 12.500 10.500 C14 11 15.500 11.500 15.500 13 C15 14.500 13.500 14 12 14.500 C10.500 15 10.500 17 11.500 18.500 C13.500 21 16.500 20.500 19 19.500 C17.500 22.500 14 24 10.500 22.500 C12.500 26.500 18 28 22 26 C26 24 28 20.500 28.300 17 C30 22 28 27.500 23 30.500 C17 33.500 9.500 32 5.500 27.500 C2.500 23.500 1.500 18 2.300 13 Z" fill="url(#ffg)"/></svg>
<svg style="position:absolute;left:439px;top:2px" width="36" height="32" viewBox="0 0 36 32"><path d="M4 6 Q4 2 9 2 L26 2 L26 26 L4 28 Z" fill="#e9f3e2" stroke="#5a9e3a" stroke-width="1.200"/><path d="M6 12 L33 9 L33 30 L6 30 Z" fill="#f4f8ee" stroke="#c9d8bd" stroke-width=".6"/><g fill="#6aa84f"><rect x="8" y="24" width="6" height="4"/><rect x="15.500" y="24" width="7" height="4"/><rect x="24" y="23.500" width="7" height="4.500"/><rect x="24" y="17.500" width="7" height="4.500"/><rect x="24" y="11.500" width="7" height="4.500"/></g><path d="M9 9 L13 9 L16 13 L19 9 L23 9 L18 15.500 L23 22 L19 22 L16 18 L13 22 L9 22 L14 15.500 Z" fill="#2e7d32"/></svg>
<svg style="position:absolute;left:507px;top:3px" width="34" height="32" viewBox="0 0 34 32"><defs><pattern id="np" width="2" height="2" patternUnits="userSpaceOnUse"><rect width="2" height="2" fill="#22d83a"/><rect width="1" height="1" fill="#d9ffd9"/></pattern></defs><path d="M3 1 L27 1 L27 23 L21 29 L3 29 Z" fill="url(#np)" stroke="#0a0a0a" stroke-width="1.200"/><path d="M21 29 L21 23 L27 23 Z" fill="#bbb" stroke="#0a0a0a" stroke-width=".8"/><path d="M14 21 L28 4 L32 7 L18 24 L13.500 25 Z" fill="#f2e11c" stroke="#555" stroke-width=".7"/><path d="M14 21 L18 24 L13.500 25 Z" fill="#eee"/></svg>
<svg style="position:absolute;left:567px;top:2.500px" width="36" height="32" viewBox="0 0 36 32"><defs><linearGradient id="wdg" x1="0" y1="0" x2="1" y2="0"><stop offset="0" stop-color="#2452a6"/><stop offset=".35" stop-color="#6d93d2"/><stop offset="1" stop-color="#e6eefa"/></linearGradient></defs><path d="M3 8 Q3 2 10 2 L25 2 L25 27 L3 29 Z" fill="url(#wdg)" stroke="#e8eef8" stroke-width="1"/><path d="M8 8 L32 6 L32 30 L8 30 Z" fill="#f8fafd" stroke="#b9c8de" stroke-width=".7"/><path d="M11 10 L13.500 10 L15 16 L16.800 10 L19 10 L20.800 16 L22.300 10 L24.800 10 L22 19 L19.800 19 L17.900 13.500 L16 19 L13.800 19 Z" fill="#2b57a4"/><g fill="#2b57a4"><rect x="26" y="10" width="4.500" height="1.300"/><rect x="26" y="13" width="4.500" height="1.300"/><rect x="26" y="16" width="4.500" height="1.300"/><rect x="11" y="21" width="19.500" height="1.500"/><rect x="11" y="24" width="19.500" height="1.500"/><rect x="11" y="27" width="19.500" height="1.500"/></g></svg>
<div class="tray" id="pt" style="letter-spacing:-0.6px;left:1407px;top:10px;font-size:12px;line-height:14px">PT</div>
<svg style="position:absolute;left:1437px;top:18px" width="9" height="5" viewBox="0 0 9 5"><path d="M0 5 L4.500 0 L9 5 Z" fill="#fff"/></svg>
<svg style="position:absolute;left:1457px;top:13px" width="18" height="16" viewBox="0 0 18 16"><rect x="5" y="3" width="11" height="9" fill="#1d3c66" stroke="#fff" stroke-width="1.300"/><rect x="8" y="12.500" width="5" height="1.200" fill="#fff"/><rect x="5.500" y="14" width="10" height="1.400" fill="#fff"/><path d="M2 1 V4 M5 1 V4" stroke="#fff" stroke-width="1.200"/><rect x="1.200" y="3.500" width="4.600" height="3" fill="#fff"/><path d="M3.500 6.500 V14.500 H6" fill="none" stroke="#fff" stroke-width="1.200"/></svg>
<svg style="position:absolute;left:1482px;top:13px" width="17" height="16" viewBox="0 0 17 16"><path d="M1.500 0.500 V15" stroke="#fff" stroke-width="1.400"/><path d="M3 1.500 Q6 0 8.500 1.500 T14 1.500 V7.500 Q11 9 8.500 7.500 T3 7.500 Z" fill="#fff"/><path d="M10.500 6.500 L16.500 15.500 L4.500 15.500 Z" fill="#f2d21b" stroke="#b99700" stroke-width=".6"/><rect x="9.900" y="9.500" width="1.300" height="3.300" fill="#222"/><rect x="9.900" y="13.500" width="1.300" height="1.200" fill="#222"/></svg>
<div class="tray" id="clk" style="letter-spacing:-0.5px;left:1531px;top:5px;font-size:12px;line-height:14px">17:40</div>
<div class="tray" id="dat" style="letter-spacing:-0.15px;left:1516px;top:22px;font-size:12px;line-height:14px">24/03/2016</div>
<div style="position:absolute;left:1586px;top:1px;width:14px;height:38px;border:1px solid #0e2a50;border-right:0;background:linear-gradient(180deg,#7092b8 0,#3e679a 40%,#1f4a82 55%,#2c5a92 100%);box-shadow:inset 1px 1px 0 rgba(255,255,255,.35)"></div>
</div>
<svg id="tab" width="260" height="31" viewBox="0 0 260 31"><defs><linearGradient id="tg" x1="0" y1="0" x2="0" y2="1"><stop offset="0" stop-color="#edf4fc"/><stop offset="1" stop-color="#e5eefa"/></linearGradient></defs><path d="M0 30 C8 30 10 26 12 20 L15 9 C16.5 4 19 2 24 2 L212 2 C218 2 221 4 223 9 L227 20 C229 26 232 30 240 30 L260 30 L260 31 L0 31 Z" fill="url(#tg)"/><path d="M0 29.5 C8 29.5 10 26 12 20 L15 9 C16.5 4 19 2 24 2 L212 2 C218 2 221 4 223 9 L227 20 C229 26 232 29.5 240 29.5 L260 29.5" fill="none" stroke="#7e93ae" stroke-width="1" opacity=".8"/><path d="M206.500 12.500 L213.500 19.500 M213.500 12.500 L206.500 19.500" stroke="#7d848d" stroke-width="2"/><path d="M238 16 H248 M243 11 V21" stroke="#39414d" stroke-width="2"/></svg>
<div style="position:absolute;left:236px;top:29px;width:1364px;height:1px;background:#7b91ad"></div>
<div class="ct" id="tabt" style="letter-spacing:0.05px;left:24px;top:8px;font-size:12px;line-height:16px">https://www.fn...am?cid=267346</div>
<div id="wc"><div style="left:0;width:27px;background:linear-gradient(180deg,#d6e1ee 0,#c3d2e3 48%,#8ea5c0 52%,#a6bbd3 100%);border-right:1px solid #364357"></div><div style="left:27px;width:27px;background:linear-gradient(180deg,#d6e1ee 0,#c3d2e3 48%,#8ea5c0 52%,#a6bbd3 100%);border-right:1px solid #364357"></div><div style="left:54px;width:50px;background:linear-gradient(180deg,#eeb3a8 0,#dc8878 46%,#c43c28 52%,#d8664a 100%)"></div><svg style="position:absolute;left:0;top:0" width="104" height="18" viewBox="0 0 104 18"><rect x="8.500" y="8.500" width="11" height="3.500" rx=".5" fill="#fff" stroke="#4b586c" stroke-width="1"/><rect x="38.500" y="2.500" width="8" height="8" rx=".8" fill="#f4f6f9" stroke="#4b586c" stroke-width="1"/><rect x="35.500" y="5.500" width="8.500" height="8.500" rx=".8" fill="#f4f6f9" stroke="#4b586c" stroke-width="1"/><rect x="38.300" y="8.300" width="3" height="3" fill="#7f98b5" stroke="#4b586c" stroke-width=".6"/><path d="M75 4.500 L83 12.500 M83 4.500 L75 12.500" stroke="#7a2f24" stroke-width="4.400"/><path d="M75 4.500 L83 12.500 M83 4.500 L75 12.500" stroke="#fff" stroke-width="2.800"/></svg></div>
<div id="urlbar"></div><div id="sbar"></div>
<svg class="ico" style="left:4px;top:34px" width="34" height="34" viewBox="0 0 34 34"><circle cx="16.900" cy="16.800" r="15.500" fill="#eaf2fb" stroke="#8da0b8" stroke-width="1"/><path d="M10 16.900 L17.600 9.200 L19.900 11.600 L16.300 15.200 H23.800 V18.600 H16.300 L19.900 22.200 L17.600 24.600 Z" fill="#4a535e"/></svg>
<svg class="ico" style="left:42px;top:42px" width="36" height="18" viewBox="0 0 36 18"><circle cx="7.800" cy="8.800" r="6.300" fill="#fff" stroke="#8f8f8f" stroke-width="1.100"/><rect x="7" y="7.500" width="1.700" height="5" fill="#8f8f8f"/><rect x="7" y="4.800" width="1.700" height="1.700" fill="#8f8f8f"/><path d="M20.500 7 V5 a3 3 0 0 1 6 0 V7" fill="none" stroke="#4a9e2c" stroke-width="1.900"/><rect x="19" y="6.500" width="8.500" height="7" rx="1" fill="#4a9e2c"/><path d="M28.600 6.600 L33.800 16.200 L23.400 16.200 Z" fill="#8f8f8f" stroke="#fff" stroke-width=".9" stroke-linejoin="round"/><rect x="27.900" y="9.800" width="1.400" height="3.300" fill="#fff"/><rect x="27.900" y="13.900" width="1.400" height="1.300" fill="#fff"/></svg>
<div style="position:absolute;left:81px;top:43px;width:1px;height:16px;background:#d2d2d2"></div>
<div class="ct" id="urlt" style="margin-top:1px;left:87px;top:43px;font-size:12px;line-height:16px;color:#7c7c7c"><span id="u1" style="letter-spacing:.42px">https://www.</span><span id="u2" style="color:#000;letter-spacing:.14px">fnde.gov.br</span><span id="u3">/sigpc/pages/ManterDemonstrativoConsolidado/ManterDemonstrativoConsolidadoCreateUpdate.seam?cid=267346</span></div>
<div style="position:absolute;left:998px;top:43px;width:1px;height:16px;background:#d9d9d9"></div>
<svg class="ico" style="left:1006px;top:43px" width="16" height="16" viewBox="0 0 16 16"><path d="M12.300 8.500 A4.500 4.500 0 1 1 10.800 4.600" fill="none" stroke="#666c74" stroke-width="1.800"/><path d="M8.800 2 L13.500 2 L13.500 6.700 Z" fill="#666c74"/></svg>
<svg class="ico" style="left:1043px;top:43px" width="16" height="16" viewBox="0 0 16 16"><circle cx="6.300" cy="6.300" r="4" fill="none" stroke="#6d737b" stroke-width="1.700"/><path d="M9.300 9.300 L14 14" stroke="#6d737b" stroke-width="2.200"/></svg>
<div class="ct" id="pesq" style="margin-top:1px;letter-spacing:-0.15px;left:1064px;top:43px;font-size:12px;line-height:16px;font-style:italic;color:#777">Pesquisar</div>
<svg class="ico" style="left:1351px;top:42px" width="18" height="18" viewBox="0 0 18 18"><path d="M9 1.800 L11.100 6.600 L16.300 7.100 L12.400 10.600 L13.500 15.700 L9 13.100 L4.500 15.700 L5.600 10.600 L1.700 7.100 L6.900 6.600 Z" fill="none" stroke="#4b545f" stroke-width="1.700" stroke-linejoin="round"/></svg>
<div style="position:absolute;left:1375px;top:43px;width:1px;height:16px;background:#b9c6d6"></div>
<svg class="ico" style="left:1383px;top:42px" width="16" height="18" viewBox="0 0 16 18"><path d="M6 2 L8 0.500 L10 2 Z" fill="#4b545f"/><rect x="1.500" y="3" width="13" height="13" rx="1.500" fill="#4b545f"/><rect x="3.500" y="6" width="2" height="2" fill="#e3edf9"/><rect x="6.500" y="6" width="6" height="2" fill="#e3edf9"/><rect x="3.500" y="9" width="2" height="2" fill="#e3edf9"/><rect x="6.500" y="9" width="6" height="2" fill="#e3edf9"/><rect x="3.500" y="12" width="2" height="2" fill="#e3edf9"/><rect x="6.500" y="12" width="6" height="2" fill="#e3edf9"/></svg>
<svg class="ico" style="left:1418px;top:43px" width="18" height="16" viewBox="0 0 18 16"><path d="M1 1.500 Q1 0.500 2 0.500 L16 0.500 Q17 0.500 17 1.500 L17 7 A8 8 0 0 1 1 7 Z" fill="#4b545f"/><path d="M5 5.500 L9 9.300 L13 5.500" fill="none" stroke="#e3edf9" stroke-width="1.900" stroke-linecap="round" stroke-linejoin="round"/></svg>
<svg class="ico" style="left:1455px;top:43px" width="16" height="16" viewBox="0 0 16 16"><path d="M5.500 1 H10.500 V7 H14.500 L8 14 L1.500 7 H5.500 Z" fill="#4b545f"/></svg>
<svg class="ico" style="left:1490px;top:43px" width="18" height="16" viewBox="0 0 18 16"><path d="M9 1 L17 8.500 L15.800 9.700 L9 3.400 L2.200 9.700 L1 8.500 Z" fill="#4b545f"/><path d="M3.800 9.300 L9 4.600 L14.200 9.300 V15 H10.500 V10.500 H7.500 V15 H3.800 Z" fill="#4b545f"/></svg>
<svg class="ico" style="left:1527px;top:42px" width="18" height="18" viewBox="0 0 18 18"><ellipse cx="9" cy="8" rx="8" ry="7" fill="#4b545f"/><path d="M3 12 L1.500 16.500 L7 14 Z" fill="#4b545f"/><circle cx="6.300" cy="6" r="1.200" fill="#e3edf9"/><circle cx="11.700" cy="6" r="1.200" fill="#e3edf9"/><path d="M4.500 8.600 Q9 13.500 13.500 8.600 Q9 10.600 4.500 8.600 Z" fill="#e3edf9"/></svg>
<div style="position:absolute;left:1557px;top:32px;width:1px;height:38px;background:linear-gradient(180deg,rgba(160,178,200,0),#b4c3d6 30%,#b4c3d6 70%,rgba(160,178,200,0))"></div>
<svg class="ico" style="left:1570px;top:43px" width="18" height="16" viewBox="0 0 18 16"><rect x="1" y="1.200" width="16" height="2.600" rx="1.300" fill="#4b545f"/><rect x="1" y="6.700" width="16" height="2.600" rx="1.300" fill="#4b545f"/><rect x="1" y="12.200" width="16" height="2.600" rx="1.300" fill="#4b545f"/></svg>
<svg class="ico" style="left:4px;top:76px" width="16" height="17" viewBox="0 0 16 17"><rect x=".5" y="1.500" width="11.500" height="14" fill="#a6cbea" stroke="#5a98cd" stroke-width="1"/><rect x="11.500" y="6.500" width="2.500" height="7.500" fill="#b5d4ee" stroke="#6aa3d3" stroke-width=".8"/><circle cx="7.300" cy="6.800" r="2.700" fill="#bcd9f1" stroke="#3b74aa" stroke-width="1.300"/><path d="M5.400 9 L2.800 12" stroke="#3b74aa" stroke-width="1.700"/></svg>
<div class="ct" id="bm1" style="margin-top:1px;letter-spacing:-0.1px;left:24px;top:77px;font-size:12px;line-height:16px">Mais visitados</div>
<svg class="ico" style="left:104.500px;top:78px" width="15" height="15" viewBox="0 0 14 14"><circle cx="7" cy="7" r="6.500" fill="#8b8e92"/><path d="M3 3.500 Q5 2 7 3 Q6 5 4.500 5.500 Q5.500 7.500 4 9 Q2 7 3 3.500 Z M8.500 2 Q11 3 11.500 5.500 Q10 6.500 9 5 Q8 3.500 8.500 2 Z M7.500 7.500 Q10 7 11 9 Q10 11.500 8 12 Q7 10 7.500 7.500 Z" fill="#d9dcdf"/></svg>
<div class="ct" id="bm2" style="margin-top:1px;letter-spacing:-0.25px;left:125px;top:77px;font-size:12px;line-height:16px">Primeiros passos</div>
<svg class="ico" style="left:219px;top:77px" width="16" height="16" viewBox="0 0 16 16"><circle cx="8" cy="8" r="8" fill="#fff"/><path d="M13.200 6.800 H8.200 V9.200 H11 A3.200 3.200 0 0 1 8.200 11.300 A3.400 3.400 0 0 1 8.200 4.500 Q9.500 4.500 10.400 5.300 L12.100 3.600 Q10.500 2.200 8.200 2.200 A5.800 5.800 0 1 0 13.300 8.500 Q13.400 7.600 13.200 6.800 Z" fill="#4285f4"/><path d="M2.900 5.600 A5.800 5.800 0 0 1 12.100 3.600 L10.400 5.300 A3.400 3.400 0 0 0 5 6.900 Z" fill="#ea4335"/><path d="M2.900 5.600 L5 6.900 A3.400 3.400 0 0 0 5 9 L2.900 10.500 A5.800 5.800 0 0 1 2.900 5.600 Z" fill="#fbbc05"/><path d="M2.900 10.500 L5 9 A3.400 3.400 0 0 0 10.300 10.600 L12.200 12.100 A5.800 5.800 0 0 1 2.900 10.500 Z" fill="#34a853"/></svg>
<div class="ct" id="bm3" style="margin-top:1px;letter-spacing:0.07px;left:242px;top:77px;font-size:12px;line-height:16px">www.convenios.gov.b...</div>
</body>
</html>
